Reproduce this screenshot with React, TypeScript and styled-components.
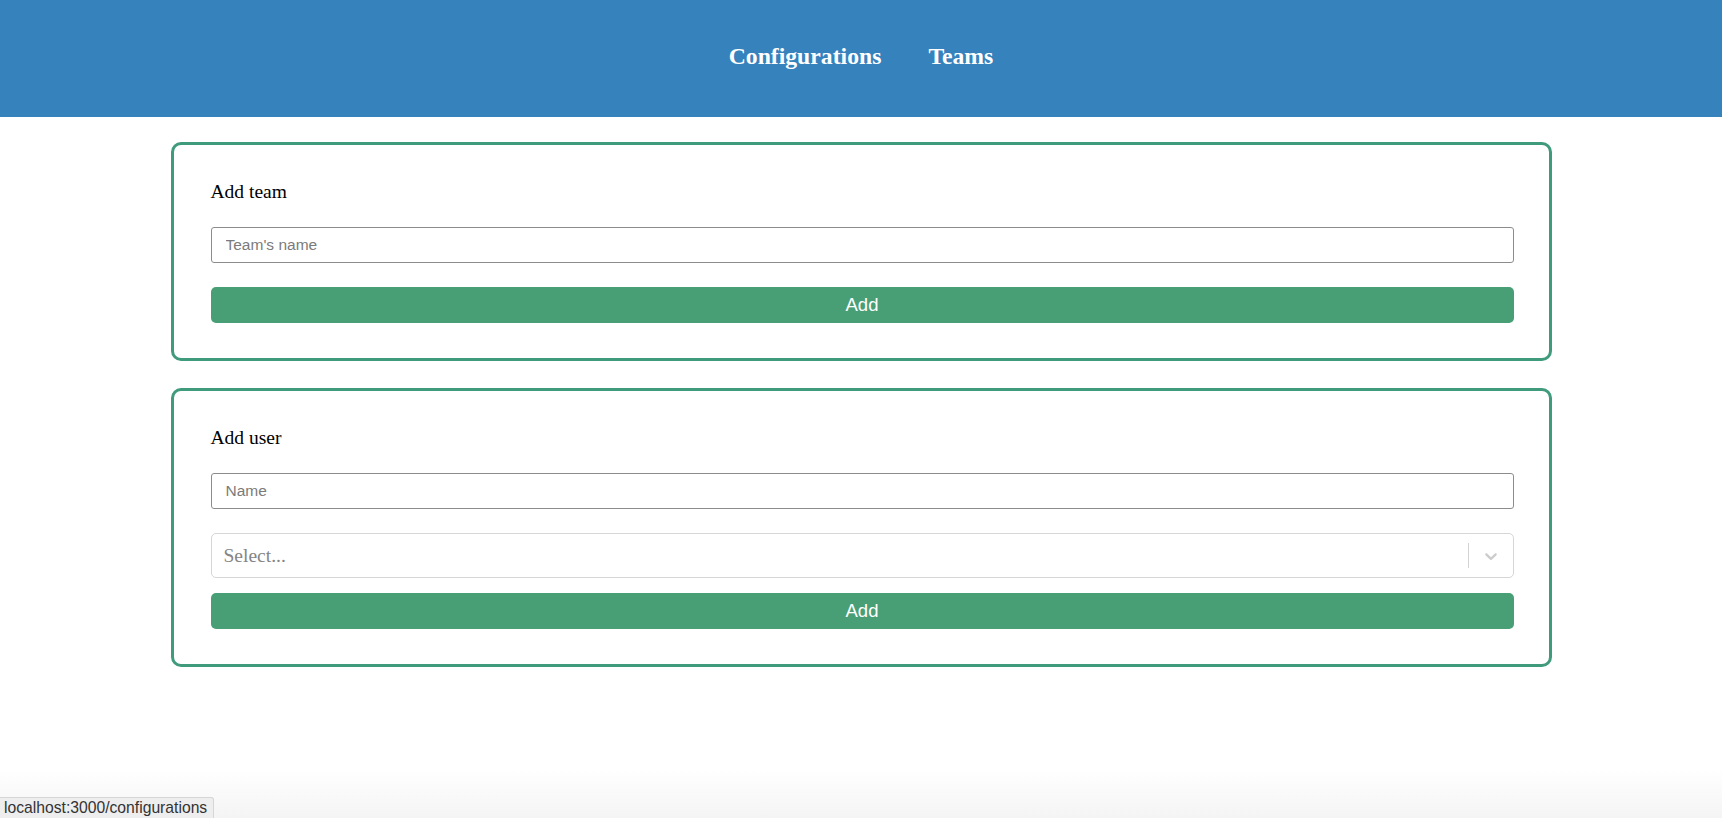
import React from "react";
import styled, { createGlobalStyle } from "styled-components";

const GlobalStyle = createGlobalStyle`
  html, body { margin: 0; padding: 0; background: #ffffff; }
  body { font-family: "Liberation Serif", "Times New Roman", serif; }
  * { box-sizing: border-box; }
`;

const Page = styled.div`
  min-height: 818px;
  background: linear-gradient(to bottom, #ffffff 0, #ffffff 770px, #f4f4f4 818px);
`;

const Header = styled.header`
  height: 117px;
  background: #3582bd;
  display: flex;
  align-items: center;
  justify-content: center;
  gap: 47px;
  padding-bottom: 4px;
`;

const NavLink = styled.a`
  font-family: "Liberation Serif", "Times New Roman", serif;
  font-weight: 700;
  font-size: 23.7px;
  color: #ffffff;
  text-decoration: none;
  cursor: pointer;
`;

const Main = styled.main`
  width: 1381px;
  margin: 25px auto 0;
  display: flex;
  flex-direction: column;
  gap: 27px;
`;

const Card = styled.section`
  border: 3px solid #409b7c;
  border-radius: 10px;
  padding: 35px 35px 35px 37px;
  display: flex;
  flex-direction: column;
`;

const Title = styled.h2`
  margin: 0 0 23px;
  font-family: "Liberation Serif", "Times New Roman", serif;
  font-weight: 400;
  font-size: 19.5px;
  line-height: 24px;
  color: #000;
`;

const TextInput = styled.input`
  height: 36px;
  width: 100%;
  border: 1px solid #8c8c8c;
  border-radius: 3px;
  padding: 0 14px;
  font-family: "Liberation Sans", Arial, sans-serif;
  font-size: 15.5px;
  color: #333;
  outline: none;
  &::placeholder { color: #7b7b7b; }
`;

const Field = styled.div<{ $gap: number }>`
  margin-bottom: ${(p) => p.$gap}px;
`;

const SelectBox = styled.div`
  height: 45px;
  border: 1px solid #d6d6d6;
  border-radius: 5px;
  display: flex;
  align-items: center;
  background: #fff;
`;

const SelectPlaceholder = styled.span`
  flex: 1;
  padding-left: 12px;
  font-family: "Liberation Serif", "Times New Roman", serif;
  font-size: 19.5px;
  color: #858585;
`;

const Separator = styled.span`
  width: 1px;
  align-self: stretch;
  margin: 9px 0;
  background: #d3d3d3;
`;

const Indicator = styled.span`
  width: 44px;
  display: flex;
  align-items: center;
  justify-content: center;
  color: #cccccc;
`;

const AddButton = styled.button`
  height: 36px;
  width: 100%;
  border: none;
  border-radius: 5px;
  background: #489e75;
  color: #ffffff;
  font-family: "Liberation Sans", Arial, sans-serif;
  font-size: 18.5px;
  cursor: pointer;
`;

const StatusBar = styled.div`
  position: fixed;
  left: 0;
  bottom: 0;
  height: 21px;
  padding: 0 6px 0 4px;
  display: flex;
  align-items: center;
  background: #eeeeee;
  border-top: 1px solid #d6d6d6;
  border-right: 1px solid #d6d6d6;
  border-top-right-radius: 3px;
  font-family: "Liberation Sans", Arial, sans-serif;
  font-size: 15.7px;
  color: #333;
`;

const Chevron = () => (
  <svg width="20" height="20" viewBox="0 0 20 20" fill="currentColor">
    <path d="M4.516 7.548c0.436-0.446 1.043-0.481 1.576 0l3.908 3.747 3.908-3.747c0.533-0.481 1.141-0.446 1.574 0 0.436 0.445 0.408 1.197 0 1.615-0.406 0.418-4.695 4.502-4.695 4.502-0.217 0.223-0.502 0.335-0.787 0.335s-0.57-0.112-0.789-0.335c0 0-4.287-4.084-4.695-4.502s-0.436-1.17 0-1.615z" />
  </svg>
);

export default function App() {
  return (
    <Page>
      <GlobalStyle />
      <Header>
        <NavLink>Configurations</NavLink>
        <NavLink>Teams</NavLink>
      </Header>
      <Main>
        <Card>
          <Title>Add team</Title>
          <Field $gap={24}>
            <TextInput placeholder="Team's name" />
          </Field>
          <AddButton>Add</AddButton>
        </Card>
        <Card>
          <Title>Add user</Title>
          <Field $gap={24}>
            <TextInput placeholder="Name" />
          </Field>
          <Field $gap={15}>
            <SelectBox>
              <SelectPlaceholder>Select...</SelectPlaceholder>
              <Separator />
              <Indicator>
                <Chevron />
              </Indicator>
            </SelectBox>
          </Field>
          <AddButton>Add</AddButton>
        </Card>
      </Main>
      <StatusBar>localhost:3000/configurations</StatusBar>
    </Page>
  );
}
